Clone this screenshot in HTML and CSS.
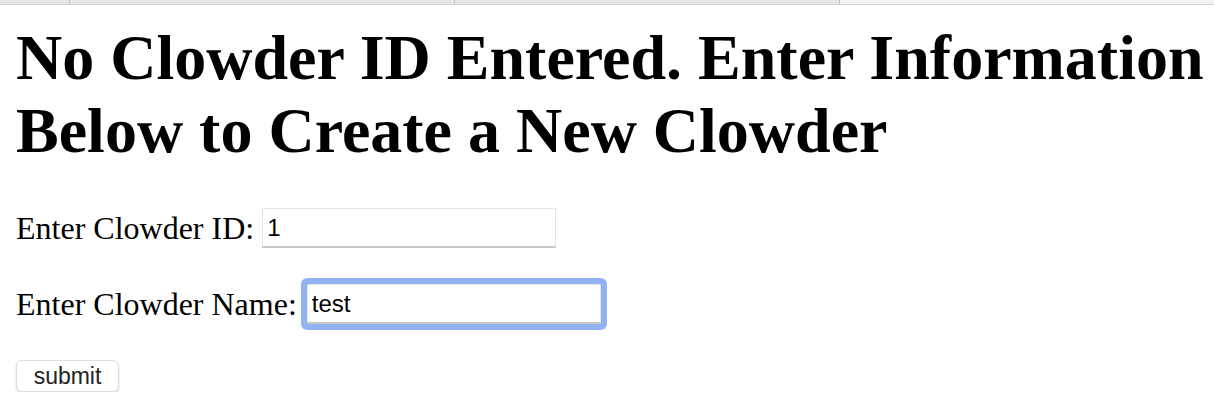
FILE: index.html
```html
<!DOCTYPE html>
<html>
<head>
<meta charset="utf-8">
<link rel="stylesheet" href="styles.css">
</head>
<body>
<div class="tabs">
  <div class="tab tab-first"></div>
  <div class="tab tab-mid"></div>
  <div class="tab tab-mid"></div>
  <div class="tab tab-active"></div>
</div>
<main class="page">
  <h1 class="title">No Clowder ID Entered. Enter Information Below to Create a New Clowder</h1>
  <form class="form">
    <div class="row">
      <label class="label" for="cid">Enter Clowder ID:</label>
      <input class="field" id="cid" type="text" value="1">
    </div>
    <div class="row">
      <label class="label" for="cname">Enter Clowder Name:</label>
      <input class="field field-focus" id="cname" type="text" value="test">
    </div>
    <div class="row">
      <button class="btn" type="button">submit</button>
    </div>
  </form>
</main>
</body>
</html>
```
FILE: styles.css
```css
html, body {
  margin: 0;
  padding: 0;
  background: #ffffff;
}
body {
  font-family: "Liberation Serif", "Times New Roman", serif;
  color: #000;
}
.tabs {
  display: flex;
  height: 4px;
  border-bottom: 1px solid #d2d2d2;
  background: #e4e4e2;
}
.tab {
  height: 4px;
  border-right: 1px solid #c4c4c4;
  background: #e6e5e3;
}
.tab-first { width: 69px; }
.tab-mid { width: 384px; }
.tab-active {
  flex: 1;
  border-right: none;
  background: #f4f3f1;
}
.page {
  padding: 16px 4px 0 16px;
}
.title {
  font-size: 64px;
  font-weight: bold;
  line-height: 73px;
  margin: 0;
}
.form {
  display: flex;
  flex-direction: column;
  margin-top: 41px;
}
.row {
  display: flex;
  align-items: center;
  height: 40px;
  margin-bottom: 36px;
}
.row:last-child { margin-bottom: 0; height: 32px; }
.label {
  font-size: 32px;
  margin-right: 8px;
}
.field {
  box-sizing: border-box;
  width: 294px;
  height: 40px;
  padding: 0 4px;
  border: 1px solid #e6e6e6;
  border-bottom: 2px solid #c8c8c8;
  background: #fff;
  font-family: "Liberation Sans", Arial, sans-serif;
  font-size: 24px;
  color: #000;
  outline: none;
}
.field-focus {
  box-shadow: 0 0 0 6px #93b2f2;
  border-radius: 2px;
  margin-left: 2px;
}
.btn {
  box-sizing: border-box;
  width: 103px;
  height: 32px;
  padding: 0;
  border: 1px solid #dedede;
  border-radius: 6px;
  background: #fff;
  box-shadow: 0 1px 2px rgba(0,0,0,0.18);
  font-family: "Liberation Sans", Arial, sans-serif;
  font-size: 23px;
  color: #222;
}
```
